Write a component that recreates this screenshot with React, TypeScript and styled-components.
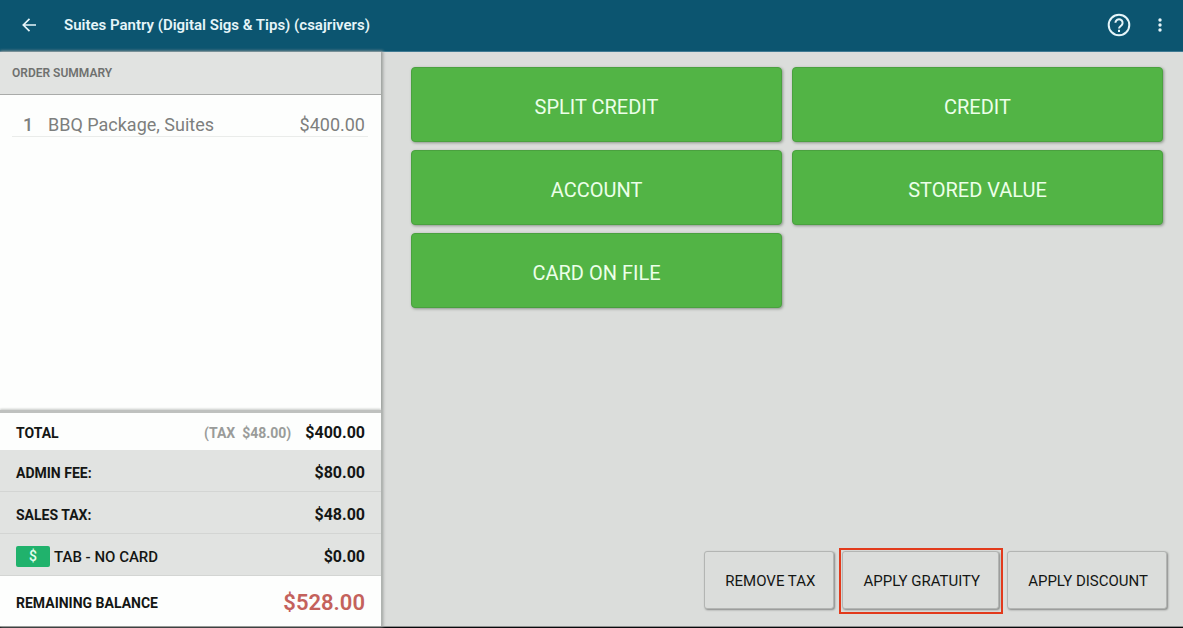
import React from "react";
import styled, { createGlobalStyle } from "styled-components";

const GlobalStyle = createGlobalStyle`
  *, *::before, *::after { box-sizing: border-box; }
  body {
    margin: 0;
    background: #dbdddb;
    font-family: Roboto, "Liberation Sans", sans-serif;
    color: #141614;
  }
  button { font: inherit; color: inherit; cursor: pointer; }
`;

const Screen = styled.div`
  min-height: 100vh;
  display: flex;
  flex-direction: column;
  border-bottom: 1px solid #08090b;
`;

const TopBar = styled.header`
  height: 52px;
  flex: none;
  display: flex;
  align-items: center;
  padding: 0 11px 1px 17px;
  background: #0c5570;
  border-bottom: 1px solid #3f7a92;
  color: #e6f5f9;
`;

const Title = styled.h1`
  flex: 1;
  margin: 0 0 0 23px;
  font-size: 15px;
  line-height: 20px;
  font-weight: 600;
`;

const IconButton = styled.button`
  display: flex;
  padding: 0;
  border: 0;
  background: none;
`;

const BarActions = styled.div`
  display: flex;
  align-items: center;
  gap: 16px;
`;

const Body = styled.div`
  flex: 1;
  display: grid;
  grid-template-columns: 381fr 802fr;
  border-bottom: 1px solid #8d8f8e;
`;

const Sidebar = styled.aside`
  position: relative;
  display: flex;
  flex-direction: column;
  background: #fdfefd;
  box-shadow: 1px 0 3px 1px #9a9d9b;
`;

const SummaryHeading = styled.h2`
  margin: 0;
  padding: 13px 12px;
  border-bottom: 1px solid #a9aba9;
  background: #e1e3e1;
  color: #6f716f;
  font-size: 12px;
  line-height: 16px;
  font-weight: 600;
`;

const Items = styled.ul`
  flex: 1;
  margin: 0;
  padding: 18px 13px 0 12px;
  list-style: none;
`;

const Item = styled.li`
  display: flex;
  padding: 0 3px 0 11px;
  border-bottom: 1px solid #eaecea;
  color: #7d7f7d;
  font-size: 18px;
  line-height: 23px;
`;

const Quantity = styled.span`
  width: 25px;
  font-weight: 500;
`;

const ItemName = styled.span`
  flex: 1;
`;

const Totals = styled.dl`
  margin: 0;
  border-top: 3px solid #bfc1bf;
  box-shadow: 0 -1px 2px #c8cac8;
`;

const TotalRow = styled.div<{ $shaded?: boolean; $large?: boolean }>`
  height: ${(p) => (p.$large ? 50 : p.$shaded ? 42 : 37)}px;
  display: flex;
  align-items: center;
  padding: 3px 16px 0 16px;
  background: ${(p) => (p.$shaded ? "#e1e3e1" : "#fdfefd")};
  box-shadow: ${(p) => (p.$shaded ? "inset 0 -1px #d3d5d3" : "none")};
`;

const Label = styled.dt<{ $tender?: boolean }>`
  flex: 1;
  display: flex;
  align-items: center;
  gap: 4px;
  font-size: ${(p) => (p.$tender ? 15 : 14)}px;
  line-height: 20px;
  font-weight: ${(p) => (p.$tender ? 500 : 700)};
`;

const TaxNote = styled.dd`
  margin: 0 14px 0 0;
  color: #9a9c9a;
  font-size: 14px;
  line-height: 20px;
  font-weight: 700;
  white-space: pre;
`;

const Amount = styled.dd<{ $due?: boolean }>`
  margin: 0;
  font-size: ${(p) => (p.$due ? 22 : 16)}px;
  line-height: 24px;
  font-weight: ${(p) => (p.$due ? 600 : 700)};
  color: ${(p) => (p.$due ? "#c4625c" : "inherit")};
`;

const CashBadge = styled.span`
  width: 34px;
  height: 21px;
  border-radius: 2px;
  background: #20b26c;
  color: #e6fff0;
  font-size: 14px;
  text-align: center;
  line-height: 21px;
`;

const Payments = styled.main`
  display: flex;
  flex-direction: column;
  justify-content: space-between;
  padding: 15px 16px 17px 30px;
`;

const PaymentGrid = styled.div`
  display: grid;
  grid-template-columns: 1fr 1fr;
  gap: 8px 10px;
  padding-right: 4px;
`;

const PaymentButton = styled.button`
  height: 75px;
  padding: 5px 6px 0;
  border: 1px solid #4aa13f;
  border-radius: 4px;
  background: #52b445;
  color: #ecffe9;
  font-size: 20px;
  line-height: 24px;
  box-shadow: 1px 1px 3px #8b958a;
`;

const Adjustments = styled.div`
  display: flex;
  justify-content: flex-end;
  gap: 8px;
`;

const AdjustButton = styled.button<{ $marked?: boolean }>`
  position: relative;
  height: 58px;
  padding: 1px 18px 0 20px;
  border: 1px solid #b3b5b3;
  border-radius: 3px;
  background: #dbdddb;
  font-size: 15px;
  line-height: 20px;
  box-shadow: 1px 1px 2px #858785;

  &::after {
    content: "";
    display: ${(p) => (p.$marked ? "block" : "none")};
    position: absolute;
    inset: -4px -5px -6px -4px;
    border: 2px solid #e23a1c;
  }
`;

const payments = ["SPLIT CREDIT", "CREDIT", "ACCOUNT", "STORED VALUE", "CARD ON FILE"];

export default function App() {
  return (
    <Screen>
      <GlobalStyle />
      <TopBar>
        <IconButton aria-label="Back">
          <svg width="24" height="24" viewBox="0 0 24 24" fill="none" stroke="currentColor" strokeWidth="1.7">
            <path d="M19 12H6.5M12.5 5.8L6.3 12l6.2 6.2" />
          </svg>
        </IconButton>
        <Title>Suites Pantry (Digital Sigs &amp; Tips) (csajrivers)</Title>
        <BarActions>
          <IconButton aria-label="Help">
            <svg width="26" height="26" viewBox="0 0 26 26" fill="none" stroke="currentColor" strokeWidth="2">
              <circle cx="13" cy="13" r="10.3" />
              <path d="M9.4 10.8a3.6 3.6 0 1 1 6.2 2.5c-1.2 1.1-2.6 1.7-2.6 3.3" />
              <path d="M13 17.8v2.2" />
            </svg>
          </IconButton>
          <IconButton aria-label="More options">
            <svg width="24" height="24" viewBox="0 0 24 24" fill="currentColor">
              <circle cx="12" cy="7" r="1.7" />
              <circle cx="12" cy="12" r="1.7" />
              <circle cx="12" cy="17" r="1.7" />
            </svg>
          </IconButton>
        </BarActions>
      </TopBar>
      <Body>
        <Sidebar>
          <SummaryHeading>ORDER SUMMARY</SummaryHeading>
          <Items>
            <Item>
              <Quantity>1</Quantity>
              <ItemName>BBQ Package, Suites</ItemName>
              <span>$400.00</span>
            </Item>
          </Items>
          <Totals>
            <TotalRow>
              <Label>TOTAL</Label>
              <TaxNote>{"(TAX  $48.00)"}</TaxNote>
              <Amount>$400.00</Amount>
            </TotalRow>
            <TotalRow $shaded>
              <Label>ADMIN FEE:</Label>
              <Amount>$80.00</Amount>
            </TotalRow>
            <TotalRow $shaded>
              <Label>SALES TAX:</Label>
              <Amount>$48.00</Amount>
            </TotalRow>
            <TotalRow $shaded>
              <Label $tender>
                <CashBadge>$</CashBadge>TAB - NO CARD
              </Label>
              <Amount>$0.00</Amount>
            </TotalRow>
            <TotalRow $large>
              <Label>REMAINING BALANCE</Label>
              <Amount $due>$528.00</Amount>
            </TotalRow>
          </Totals>
        </Sidebar>
        <Payments>
          <PaymentGrid>
            {payments.map((name) => (
              <PaymentButton key={name}>{name}</PaymentButton>
            ))}
          </PaymentGrid>
          <Adjustments>
            <AdjustButton>REMOVE TAX</AdjustButton>
            <AdjustButton $marked>APPLY GRATUITY</AdjustButton>
            <AdjustButton>APPLY DISCOUNT</AdjustButton>
          </Adjustments>
        </Payments>
      </Body>
    </Screen>
  );
}
